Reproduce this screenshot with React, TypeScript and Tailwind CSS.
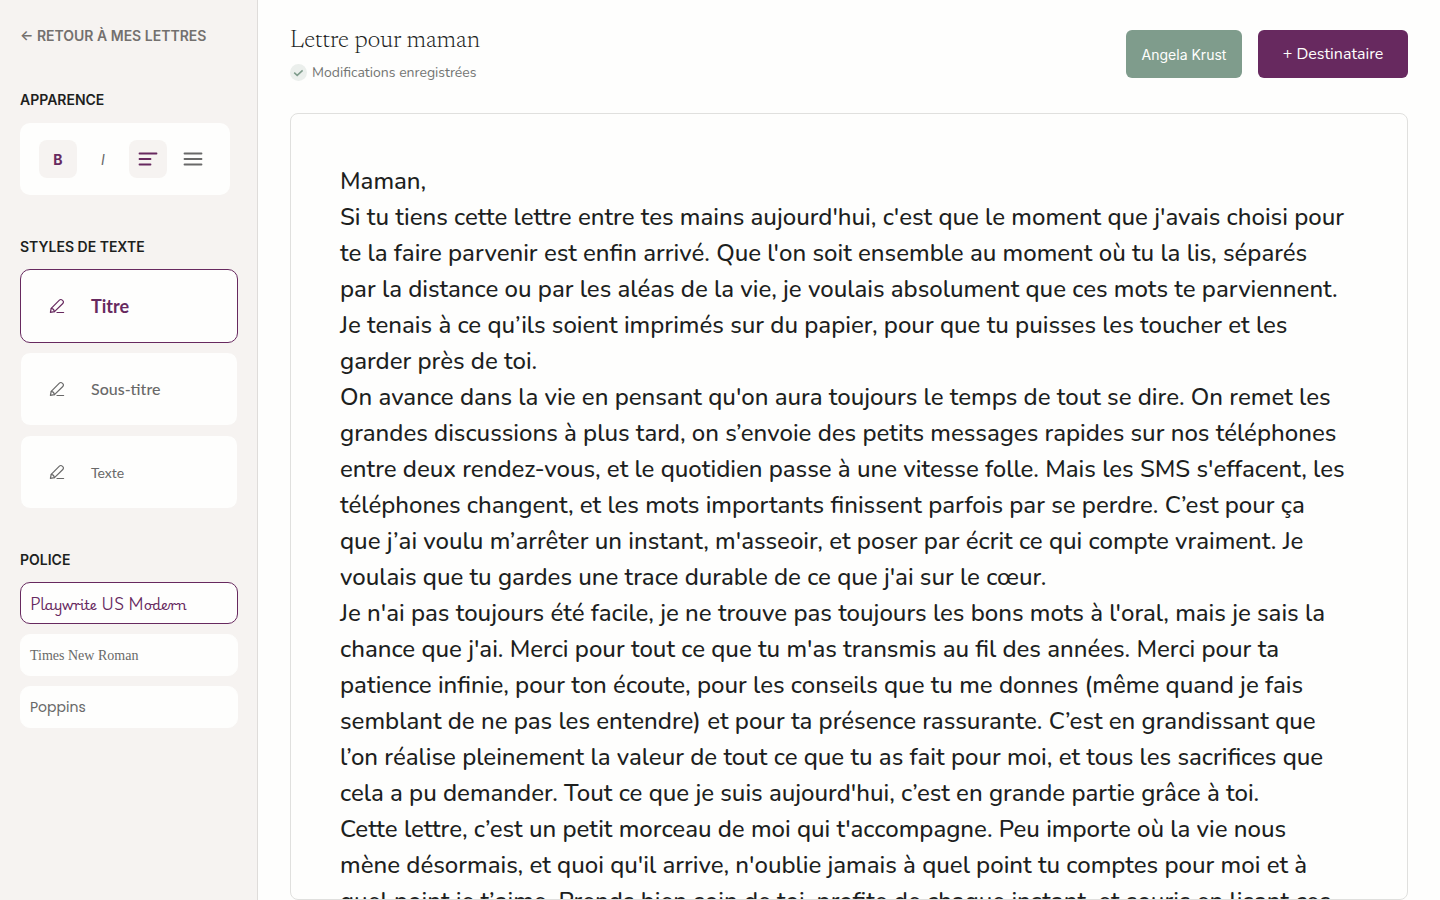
import { useState } from "react";

const letter = [
  "Maman,",
  "Si tu tiens cette lettre entre tes mains aujourd'hui, c'est que le moment que j'avais choisi pour te la faire parvenir est enfin arrivé. Que l'on soit ensemble au moment où tu la lis, séparés par la distance ou par les aléas de la vie, je voulais absolument que ces mots te parviennent. Je tenais à ce qu’ils soient imprimés sur du papier, pour que tu puisses les toucher et les garder près de toi.",
  "On avance dans la vie en pensant qu'on aura toujours le temps de tout se dire. On remet les grandes discussions à plus tard, on s’envoie des petits messages rapides sur nos téléphones entre deux rendez-vous, et le quotidien passe à une vitesse folle. Mais les SMS s'effacent, les téléphones changent, et les mots importants finissent parfois par se perdre. C’est pour ça que j’ai voulu m’arrêter un instant, m'asseoir, et poser par écrit ce qui compte vraiment. Je voulais que tu gardes une trace durable de ce que j'ai sur le cœur.",
  "Je n'ai pas toujours été facile, je ne trouve pas toujours les bons mots à l'oral, mais je sais la chance que j'ai. Merci pour tout ce que tu m'as transmis au fil des années. Merci pour ta patience infinie, pour ton écoute, pour les conseils que tu me donnes (même quand je fais semblant de ne pas les entendre) et pour ta présence rassurante. C’est en grandissant que l’on réalise pleinement la valeur de tout ce que tu as fait pour moi, et tous les sacrifices que cela a pu demander. Tout ce que je suis aujourd'hui, c’est en grande partie grâce à toi.",
  "Cette lettre, c’est un petit morceau de moi qui t'accompagne. Peu importe où la vie nous mène désormais, et quoi qu'il arrive, n'oublie jamais à quel point tu comptes pour moi et à quel point je t’aime. Prends bien soin de toi, profite de chaque instant, et souris en lisant ces",
].join("\n");

const textStyles = [
  { name: "Titre", className: "text-[18px] font-bold" },
  { name: "Sous-titre", className: "text-[16px] font-medium" },
  { name: "Texte", className: "text-[14px]" },
];

const fonts = [
  { name: "Playwrite US Modern", className: "font-['Playwrite_US_Modern','Lato',cursive] text-[14px]" },
  { name: "Times New Roman", className: "font-['Liberation_Serif',serif] text-[14px]" },
  { name: "Poppins", className: "font-['Poppins','Inter',sans-serif] text-[14px]" },
];

function PenIcon() {
  return (
    <svg className="size-4" viewBox="0 0 16 16" fill="none" stroke="currentColor" strokeWidth="1.2" strokeLinecap="round" strokeLinejoin="round" aria-hidden="true">
      <path d="M1.4 14.4 2.2 10.4 10.4 2.1a2 2 0 0 1 2.9 0l.5.5a2 2 0 0 1 0 2.9L5.5 13.6Z" />
      <path d="M2.3 10.4c1.5.2 2.8 1.5 3.2 3.2" />
      <path d="M8 14.5h6.6" />
    </svg>
  );
}

function LinesIcon({ left }: { left?: boolean }) {
  return (
    <svg className="h-4 w-5" viewBox="0 0 20 16" fill="none" stroke="currentColor" strokeWidth="1.8" strokeLinecap="round" aria-hidden="true">
      <path d={left ? "M1.5 2.5h17M1.5 8h11M1.5 13.5h11" : "M1.5 2.5h17M1.5 8h17M1.5 13.5h17"} />
    </svg>
  );
}

function SectionTitle({ children }: { children: string }) {
  return <h2 className="text-[14px] leading-5 font-semibold text-[#1d1f1e] uppercase">{children}</h2>;
}

export default function App() {
  const [text, setText] = useState(letter);
  const [style, setStyle] = useState("Titre");
  const [font, setFont] = useState("Playwrite US Modern");
  const toolButton = "flex size-[38px] items-center justify-center rounded-lg";

  return (
    <div className="flex h-screen bg-[#fefefd] font-['Nunito','Lato',sans-serif] text-[#1d1f1e]">
      <aside className="w-[258px] shrink-0 border-r border-[#dfdcda] bg-[#f6f3f1] pt-[26px] pr-[19px] pl-5 font-['Inter',sans-serif]">
        <a href="#lettres" className="block text-[14px] leading-5 font-semibold text-[#73706e]">← RETOUR À MES LETTRES</a>

        <section className="mt-11">
          <SectionTitle>Apparence</SectionTitle>
          <div className="mt-[13px] flex h-[72px] w-[210px] items-center gap-[7px] rounded-[10px] bg-[#fefefd] pl-[19px] text-[#696969]">
            <button type="button" aria-label="Gras" aria-pressed="true" className={`${toolButton} bg-[#f6f3f1] text-[14px] font-bold text-[#67295f]`}>B</button>
            <button type="button" aria-label="Italique" className={`${toolButton} text-[14px] italic`}>I</button>
            <button type="button" aria-label="Aligner à gauche" aria-pressed="true" className={`${toolButton} bg-[#f6f3f1] text-[#67295f]`}><LinesIcon left /></button>
            <button type="button" aria-label="Justifier" className={toolButton}><LinesIcon /></button>
          </div>
        </section>

        <section className="mt-[42px]">
          <SectionTitle>Styles de texte</SectionTitle>
          <div className="mt-3 flex flex-col gap-[9px] font-['Lato',sans-serif]">
            {textStyles.map((s) => (
              <button
                key={s.name}
                type="button"
                onClick={() => setStyle(s.name)}
                className={`flex h-[74px] items-center gap-[26px] rounded-[10px] border bg-[#fefefd] pl-7 ${s.name === style ? "border-[#67295f] text-[#67295f]" : "border-[#f6f3f1] text-[#696969]"}`}
              >
                <PenIcon />
                <span className={s.className}>{s.name}</span>
              </button>
            ))}
          </div>
        </section>

        <section className="mt-[41px]">
          <SectionTitle>Police</SectionTitle>
          <div className="mt-3 flex flex-col gap-[10px]">
            {fonts.map((f) => (
              <button
                key={f.name}
                type="button"
                onClick={() => setFont(f.name)}
                className={`h-[42px] rounded-[10px] border bg-[#fefefd] px-[9px] text-left ${f.className} ${f.name === font ? "border-[#67295f] text-[#67295f]" : "border-[#fefefd] text-[#696969]"}`}
              >
                {f.name}
              </button>
            ))}
          </div>
        </section>
      </aside>

      <main className="flex min-w-0 flex-1 flex-col px-8 pt-[26px]">
        <header className="flex justify-between">
          <div>
            <h1 className="font-['Newsreader','Liberation_Serif',serif] text-[25px] leading-8 font-light">Lettre pour maman</h1>
            <p className="mt-1 flex items-center gap-[5px] text-[14px] leading-[21px] text-[#737573]">
              <svg className="size-[17px]" viewBox="0 0 17 17" fill="none" aria-hidden="true">
                <circle cx="8.5" cy="8.5" r="8.5" fill="#ebefec" />
                <path d="m4.2 8.6 3 2.8 5.4-5" stroke="#7f9c8c" strokeWidth="1.5" />
              </svg>
              Modifications enregistrées
            </p>
          </div>
          <div className="mt-1 flex h-12 gap-4 text-[#fefefd]">
            <button type="button" className="w-[116px] rounded-md bg-[#7f9c8c] font-['Inter',sans-serif] text-[14px]">Angela Krust</button>
            <button type="button" className="w-[150px] rounded-md bg-[#67295f] text-[16px]">+ Destinataire</button>
          </div>
        </header>
        <textarea
          aria-label="Contenu de la lettre"
          value={text}
          onChange={(e) => setText(e.target.value)}
          spellCheck={false}
          className="mt-[30px] block w-full flex-1 resize-none overflow-hidden rounded-lg border border-[#e0e0de] py-[49px] pr-[60px] pl-[49px] text-[24px] leading-9 font-medium outline-none"
        />
      </main>
    </div>
  );
}
